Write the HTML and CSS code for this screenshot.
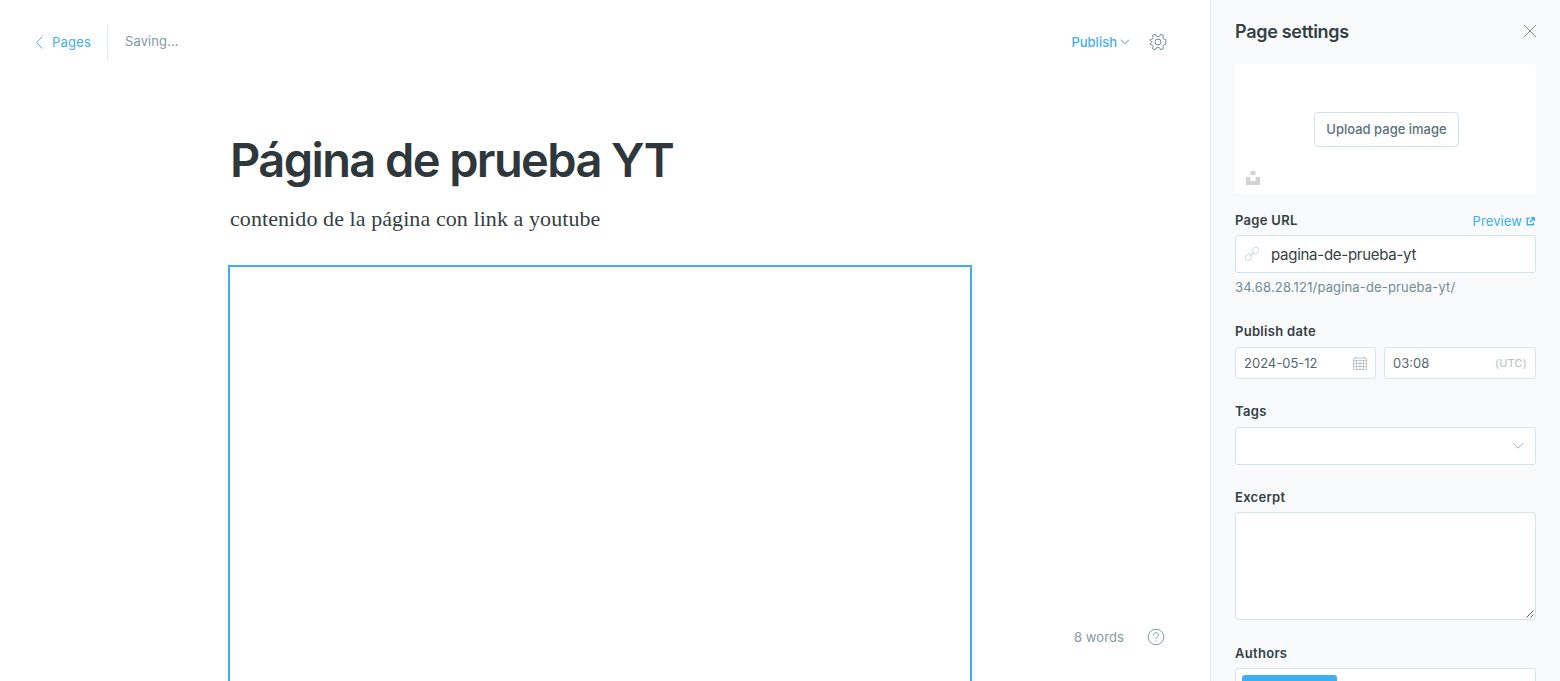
FILE: index.html
```html
<!DOCTYPE html>
<html lang="es">
<head>
<meta charset="utf-8">
<title>Página de prueba YT</title>
<link rel="stylesheet" href="styles.css">
</head>
<body>
<div class="app">
  <main class="editor">
    <header class="toolbar">
      <a class="back">
        <svg width="9" height="13" viewBox="0 0 9 13"><path d="M7.5 .5 1.5 6.5l6 6"/></svg>
        <span>Pages</span>
      </a>
      <span class="status">Saving...</span>
      <a class="publish"><span>Publish</span>
        <svg width="10" height="6" viewBox="0 0 10 6"><path d="m1 .7 4 4 4-4"/></svg>
      </a>
      <svg class="gear" width="18" height="18" viewBox="0 0 18 18"><circle cx="9" cy="9" r="3"/><path d="M6.2 1.2 7.1 2.9Q9 4.3 10.9 2.9L11.8 1.2 14.5 2.5 13.9 4.4Q14.1 6 15.4 6.3L16.8 6.5V11.5L15.4 11.7Q14.1 12 13.9 13.6L14.5 15.5 11.8 16.8 10.9 15.1Q9 13.7 7.1 15.1L6.2 16.8 3.5 15.5 4.1 13.6Q3.9 12 2.6 11.7L1.2 11.5V10.8L2.5 9.7Q3 9 2.5 8.3L1.2 7.2V6.5L2.6 6.3Q3.9 6 4.1 4.4L3.5 2.5Z"/></svg>
    </header>
    <article class="post">
      <h1>Página de prueba YT</h1>
      <p>contenido de la página con link a youtube</p>
      <div class="embed"></div>
    </article>
    <div class="footer">
      <span>8 words</span>
      <svg width="18" height="18" viewBox="0 0 18 18"><circle cx="9" cy="9" r="7.8"/><path d="M6.5 7.2C6.5 3.8 11.6 4 11.5 7c0 1.9-2.5 1.9-2.5 3.8"/><path d="M9 12.5v1"/></svg>
    </div>
  </main>
  <aside class="panel">
    <div class="panel-head">
      <h2>Page settings</h2>
      <svg width="14" height="14" viewBox="0 0 14 14"><path d="m1 1 12 12M13 1 1 13"/></svg>
    </div>
    <div class="uploader">
      <button class="upload">Upload page image</button>
      <svg class="unsplash" width="14" height="14" viewBox="0 0 14 14"><path d="M4.5 0h5v4h-5zM0 6h4.5v4h5V6H14v8H0z"/></svg>
    </div>
    <div class="label url-label"><span>Page URL</span>
      <a class="preview"><span>Preview</span><svg width="9" height="9" viewBox="0 0 9 9"><path d="M3.5 1.2H1.2v6.6h6.1V5.5M5 .8h3.2V4M8 1 4 5"/></svg></a>
    </div>
    <div class="field url">
      <svg width="14" height="14" viewBox="0 0 14 14"><g transform="rotate(-45 7 7)"><rect x="-1.3" y="4.4" width="7.2" height="5.2" rx="2.6"/><rect x="8.1" y="4.4" width="7.2" height="5.2" rx="2.6"/><path d="M4 7h6"/></g></svg>
      <span>pagina-de-prueba-yt</span>
    </div>
    <div class="hint">34.68.28.121/pagina-de-prueba-yt/</div>
    <div class="label date-label">Publish date</div>
    <div class="dates">
      <div class="field date"><span>2024-05-12</span>
        <svg width="14" height="14" viewBox="0 0 14 14"><path d="M.5 2h13v11.5H.5zM.5 4.5h13M.5 7.5h13M.5 10.5h13M3.5 4.5v9M7 4.5v9M10.5 4.5v9M3 0v3M11 0v3"/></svg>
      </div>
      <div class="field time"><span>03:08</span><small>(UTC)</small></div>
    </div>
    <div class="label tags-label">Tags</div>
    <div class="field tags"><svg width="12" height="8" viewBox="0 0 12 8"><path d="m1 1.2 5 5 5-5"/></svg></div>
    <div class="label excerpt-label">Excerpt</div>
    <div class="field excerpt"><svg width="8" height="8" viewBox="0 0 8 8"><path d="M.5 7.5l7-7M4.5 7.5l3-3"/></svg></div>
    <div class="label authors-label">Authors</div>
    <div class="field authors"><div class="author"></div></div>
  </aside>
</div>
</body>
</html>
```
FILE: styles.css
```css
* { box-sizing: border-box; }
body { margin: 0; font-family: Inter, "Liberation Sans", sans-serif; color: #343f44; background: #fff; }
svg { display: block; fill: none; stroke: currentColor; flex: none; }
h1, h2, p { margin: 0; }
.app { display: flex; height: 681px; overflow: hidden; }
.editor { flex: 1; height: 681px; position: relative; overflow: hidden; }
.toolbar { display: flex; align-items: center; height: 60px; padding: 24px 43px 0 35px; font-size: 13px; line-height: 20px; }
.back { display: flex; align-items: center; gap: 8px; height: 36px; width: 73px; border-right: 1px solid #dfeaf1; color: #3eb0ef; letter-spacing: .2px; }
.back svg { stroke-width: .9; }
.status { margin: -2px auto 0 17px; color: #839aa5; letter-spacing: .1px; }
.publish { display: flex; align-items: center; gap: 3px; color: #3eb0ef; font-weight: 500; }
.publish svg { color: #738a94; }
.gear { margin-left: 19px; color: #738a94; }
.post { width: 744px; margin: 69px 0 0 228px; }
.post h1 { height: 62px; padding-left: 2px; font-size: 47px; line-height: 61px; font-weight: 600; letter-spacing: -1.6px; color: #2e373b; white-space: nowrap; }
.post p { height: 32px; margin: 12px 0 30px; padding-left: 2px; font: 22px/32px "Liberation Serif", serif; letter-spacing: .08px; color: #343f44; white-space: nowrap; }
.embed { height: 430px; border: 2px solid #3eb0ef; }
.footer { position: absolute; right: 45px; bottom: 34px; display: flex; align-items: center; gap: 23px; color: #839aa5; font-size: 13px; line-height: 20px; letter-spacing: .1px; }
.panel { width: 350px; height: 681px; overflow: hidden; padding: 20px 24px 0; border-left: 1px solid #dfeaf1; background: #f8fafc; }
.panel-head { display: flex; justify-content: space-between; height: 44px; }
.panel-head h2 { font-size: 18px; line-height: 24px; font-weight: 600; letter-spacing: -.3px; }
.panel-head svg { margin: 4px -1px 0 0; stroke-width: .8; color: #62696c; }
.uploader { height: 130px; position: relative; display: flex; justify-content: center; align-items: center; padding-left: 2px; border-radius: 4px; background: #fff; }
.upload { width: 145px; height: 35px; padding: 0; border: 1px solid #d3e1e7; border-radius: 4px; background: #fff; color: #5b7179; font: 500 13px Inter, sans-serif; letter-spacing: 0; }
.unsplash { position: absolute; left: 11px; bottom: 9px; fill: #d3d3d3; stroke: none; }
.label { display: flex; justify-content: space-between; height: 18px; font-size: 13px; line-height: 18px; font-weight: 600; letter-spacing: .3px; }
.url-label { margin: 17px 0 6px; }
.preview { display: flex; align-items: center; gap: 4px; height: 20px; color: #3eb0ef; font-weight: 400; letter-spacing: .1px; }
.preview svg { stroke-width: 1.4; margin-right: 1px; }
.field { border: 1px solid #d5e3eb; border-radius: 3px; background: #fff; display: flex; align-items: center; }
.url { height: 38px; padding-left: 9px; gap: 12px; font-size: 15px; letter-spacing: -.27px; }
.url svg { color: #d0dfe8; }
.hint { height: 20px; margin: 4px 0 25px; font-size: 13px; line-height: 20px; letter-spacing: .15px; color: #738a94; }
.date-label { margin-bottom: 7px; }
.dates { display: grid; grid-template-columns: 141px 152px; gap: 8px; color: #54666d; font-size: 13px; letter-spacing: 0; }
.date, .time { height: 32px; padding: 0 8px; justify-content: space-between; }
.date svg { color: #bcc4c7; stroke-width: .9; }
.time small { font-size: 11px; letter-spacing: .2px; color: #b4bec3; }
.tags-label { margin: 23px 0 7px; }
.tags { height: 38px; justify-content: flex-end; padding-right: 11px; }
.tags svg { color: #9baeb8; }
.excerpt-label { margin: 23px 0 6px; }
.excerpt { height: 108px; align-items: flex-end; justify-content: flex-end; padding: 1px; }
.excerpt svg { color: #555; stroke-width: .9; }
.authors-label { margin: 24px 0 6px; }
.authors { height: 38px; padding: 6px; align-items: flex-start; }
.author { width: 95px; height: 25px; border-radius: 3px; background: #3eb0ef; }
```
